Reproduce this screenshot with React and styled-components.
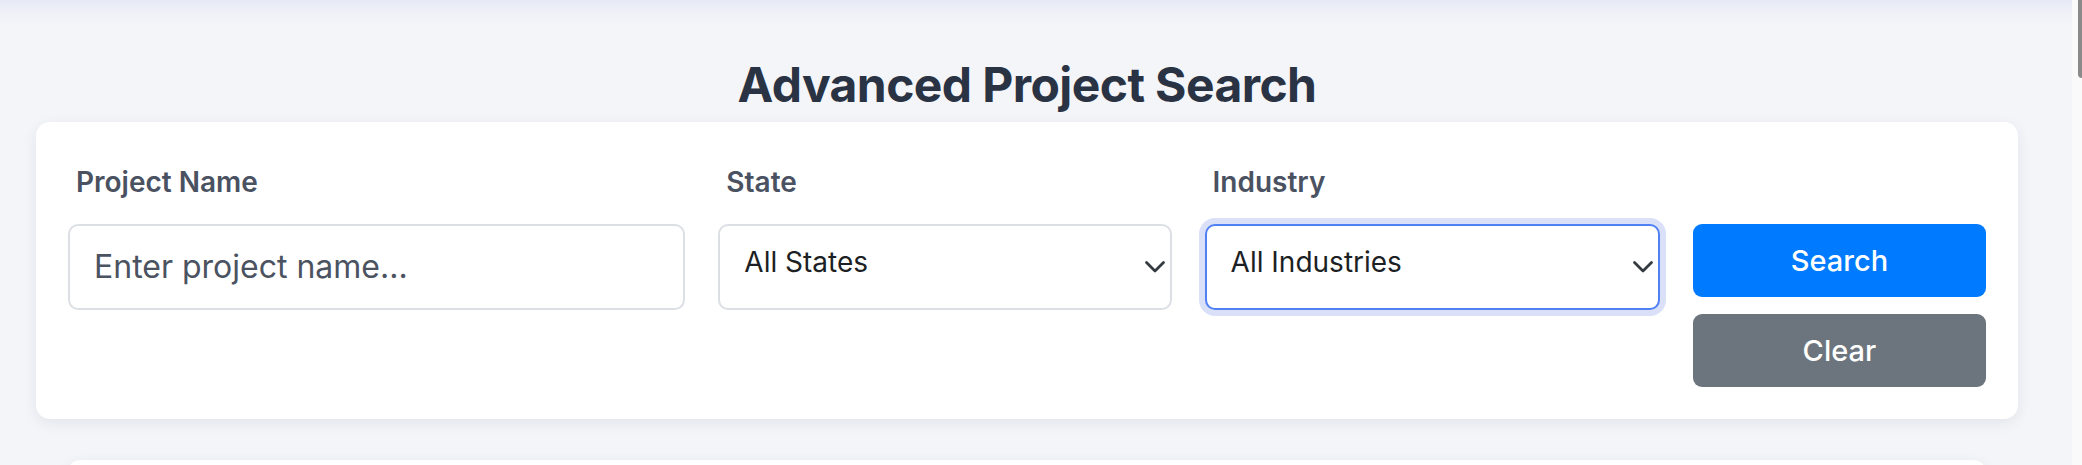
import React from 'react';
import styled, { createGlobalStyle } from 'styled-components';

const GlobalStyle = createGlobalStyle`
  html, body {
    margin: 0;
    padding: 0;
    height: 100%;
    overflow: hidden;
    background: #f4f5f9;
  }
  body {
    font-family: Inter, "Noto Sans", "Liberation Sans", sans-serif;
  }
  * {
    box-sizing: border-box;
  }
`;

const states = ['All States', 'California', 'Texas', 'New York', 'Florida'];
const industries = ['All Industries', 'Energy', 'Healthcare', 'Manufacturing', 'Technology'];

const Chevron = () => (
  <ChevronIcon width="22" height="14" viewBox="0 0 22 14" aria-hidden="true">
    <path d="M2.5 2.5 L11 11 L19.5 2.5" />
  </ChevronIcon>
);

const SelectField = ({ options, focused }) => (
  <SelectWrap>
    <Select focused={focused} defaultValue={options[0]}>
      {options.map(o => (
        <option key={o} value={o}>
          {o}
        </option>
      ))}
    </Select>
    <Chevron />
  </SelectWrap>
);

const App = () => {
  return (
    <Page>
      <GlobalStyle />
      <Main>
        <Title>Advanced Project Search</Title>
        <SearchCard>
          <FieldGrid>
            <Label>Project Name</Label>
            <Label>State</Label>
            <Label>Industry</Label>
            <span />
            <TextInput placeholder="Enter project name..." />
            <SelectField options={states} />
            <SelectField options={industries} focused />
            <ButtonStack>
              <Button variant="primary">Search</Button>
              <Button variant="secondary">Clear</Button>
            </ButtonStack>
          </FieldGrid>
        </SearchCard>
        <ResultsCard />
      </Main>
      <ScrollTrack>
        <ScrollThumb />
      </ScrollTrack>
    </Page>
  );
};

const Page = styled.div`
  display: flex;
  height: 465px;
  overflow: hidden;
`;

const Main = styled.main`
  flex: 1;
  min-width: 0;
  padding: 0 54px 0 36px;
  background: linear-gradient(180deg, #e6e9f6 0px, #eff1f8 12px, #f4f5f9 26px);
`;

const Title = styled.h1`
  margin: 0;
  padding-top: 56px;
  font-size: 48px;
  line-height: 58px;
  font-weight: 700;
  color: #2a3344;
  text-align: center;
  letter-spacing: -0.6px;
`;

const SearchCard = styled.section`
  margin-top: 8px;
  background: #fff;
  border-radius: 14px;
  padding: 44px 32px 32px;
  box-shadow: 0 4px 14px rgba(30, 40, 70, 0.08);
`;

const FieldGrid = styled.div`
  display: grid;
  grid-template-columns: 617fr 453fr 455fr 293fr;
  column-gap: 33px;
  align-items: start;
`;

const Label = styled.label`
  display: block;
  padding-left: 8px;
  margin-bottom: 25px;
  font-size: 28px;
  line-height: 33px;
  font-weight: 600;
  color: #4a5262;
`;

const TextInput = styled.input`
  width: 100%;
  height: 86px;
  padding: 0 24px 2px;
  border: 2px solid #dcdfe4;
  border-radius: 10px;
  font-family: inherit;
  font-size: 32px;
  color: #212529;
  background: #fff;
  outline: none;
  &::placeholder {
    color: #4b5361;
  }
`;

const SelectWrap = styled.div`
  position: relative;
`;

const Select = styled.select`
  width: 100%;
  height: 86px;
  padding: 0 40px 10px 24px;
  border: 2px solid ${props => (props.focused ? '#4f80f4' : '#dcdfe4')};
  border-radius: 10px;
  box-shadow: ${props => (props.focused ? '0 0 0 6px #dbe0f9' : 'none')};
  font-family: inherit;
  font-size: 28px;
  color: #1c1f24;
  background: #fff;
  appearance: none;
  -webkit-appearance: none;
  outline: none;
`;

const ChevronIcon = styled.svg`
  position: absolute;
  right: 6px;
  top: 50%;
  transform: translateY(-50%);
  pointer-events: none;
  path {
    fill: none;
    stroke: #343a40;
    stroke-width: 2.8;
    stroke-linecap: round;
    stroke-linejoin: round;
  }
`;

const ButtonStack = styled.div`
  display: flex;
  flex-direction: column;
  gap: 17px;
`;

const Button = styled.button`
  height: 73px;
  border: none;
  border-radius: 9px;
  font-family: inherit;
  font-size: 29px;
  font-weight: 500;
  color: #fff;
  background: ${props => (props.variant === 'primary' ? '#007bff' : '#6c757d')};
  cursor: pointer;
`;

const ResultsCard = styled.section`
  margin: 41px 31px 0;
  height: 200px;
  background: #fff;
  border-radius: 14px;
  box-shadow: 0 4px 14px rgba(30, 40, 70, 0.08);
`;

const ScrollTrack = styled.div`
  width: 10px;
  flex-shrink: 0;
  background: #fafafa;
  display: flex;
  justify-content: flex-end;
`;

const ScrollThumb = styled.div`
  width: 4px;
  height: 78px;
  background: #8a8a8a;
  border-radius: 0 0 0 4px;
`;

export default App;
